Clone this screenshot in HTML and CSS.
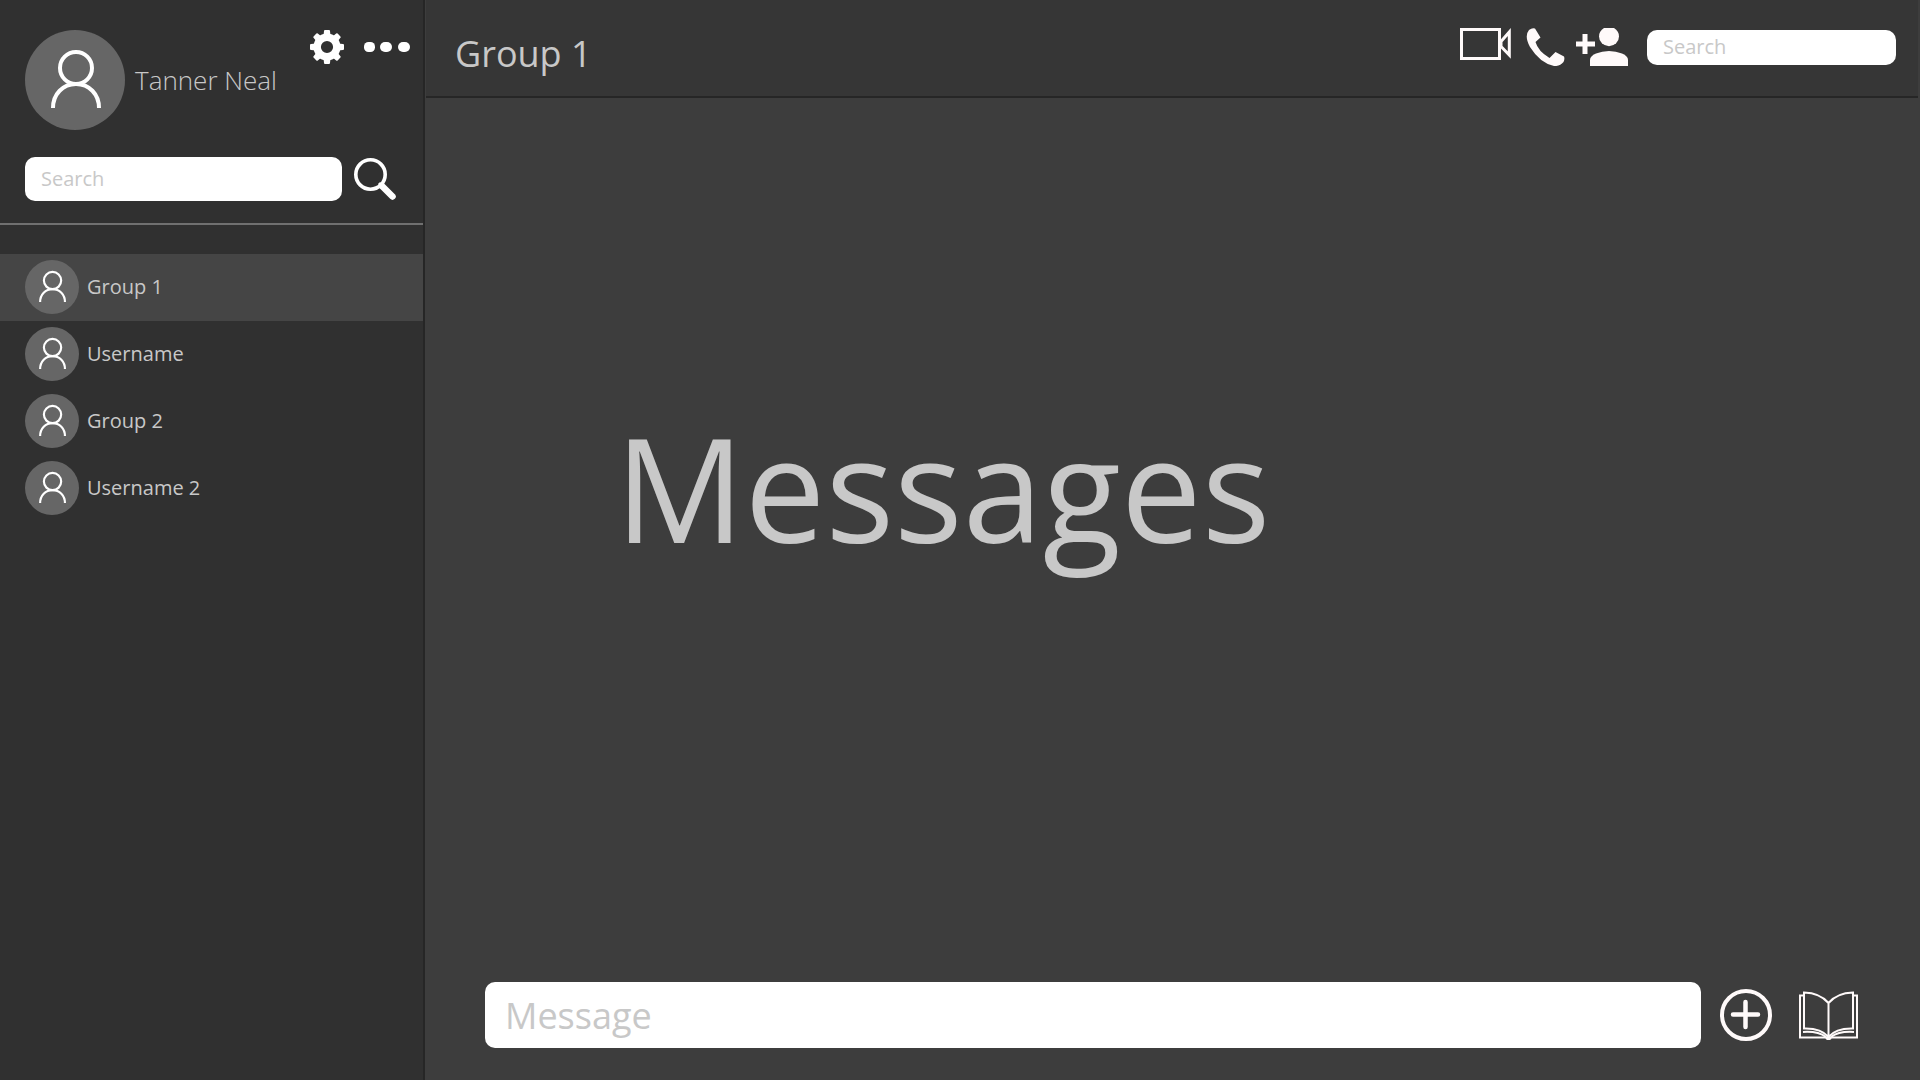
FILE: index.html
```html
<!DOCTYPE html>
<html lang="en">
<head>
<meta charset="utf-8">
<meta name="viewport" content="width=device-width, initial-scale=1">
<title>Group 1</title>
<link rel="stylesheet" href="styles.css">
</head>
<body>
<svg width="0" height="0" class="sprite" aria-hidden="true">
  <symbol id="person" viewBox="0 0 100 100">
    <circle cx="51" cy="38" r="16"/>
    <path d="M28 78C28 64 38 54 51 54S74 64 74 78"/>
  </symbol>
</svg>
<div class="app">
  <aside class="sidebar">
    <div class="profile">
      <span class="avatar avatar-large"><svg><use href="#person"/></svg></span>
      <span class="profile-name">Tanner Neal</span>
      <div class="profile-actions">
        <button class="icon-button" aria-label="Settings">
          <svg width="34" height="34" viewBox="0 0 34 34">
            <g fill="#fff">
              <path id="tooth" d="M13.500 6L14 1Q14 0 15 0H19Q20 0 20 1L20.500 6Z"/>
              <use href="#tooth" transform="rotate(45 17 17)"/>
              <use href="#tooth" transform="rotate(90 17 17)"/>
              <use href="#tooth" transform="rotate(135 17 17)"/>
              <use href="#tooth" transform="rotate(180 17 17)"/>
              <use href="#tooth" transform="rotate(225 17 17)"/>
              <use href="#tooth" transform="rotate(270 17 17)"/>
              <use href="#tooth" transform="rotate(315 17 17)"/>
            </g>
            <circle cx="17" cy="17" r="9.800" fill="none" stroke="#fff" stroke-width="7.400"/>
          </svg>
        </button>
        <button class="icon-button" aria-label="More">
          <svg width="46" height="10" viewBox="0 0 46 10" fill="#fff">
            <rect width="11" height="10" rx="4.500"/><rect x="16" width="12" height="10" rx="5"/><rect x="34" width="12" height="10" rx="5"/>
          </svg>
        </button>
      </div>
    </div>
    <form class="search-row">
      <input class="field sidebar-search" type="search" placeholder="Search" aria-label="Search conversations">
      <button class="icon-button" type="button" aria-label="Search">
        <svg width="42" height="42" viewBox="0 0 42 42" fill="none" stroke="#fff">
          <circle cx="16.500" cy="16.500" r="14.700" stroke-width="3.600"/>
          <path d="M28 28L38.500 38.500" stroke-width="6.500" stroke-linecap="round"/>
          <path d="M25 25L30 30" stroke-width="3"/>
        </svg>
      </button>
    </form>
    <nav class="conversations">
      <a class="conversation selected" href="#"><span class="avatar"><svg><use href="#person"/></svg></span>Group 1</a>
      <a class="conversation" href="#"><span class="avatar"><svg><use href="#person"/></svg></span>Username</a>
      <a class="conversation" href="#"><span class="avatar"><svg><use href="#person"/></svg></span>Group 2</a>
      <a class="conversation" href="#"><span class="avatar"><svg><use href="#person"/></svg></span>Username 2</a>
    </nav>
  </aside>
  <main class="chat">
    <header class="chat-header">
      <h1 class="chat-title">Group 1</h1>
      <div class="chat-tools">
        <button class="icon-button" aria-label="Video call">
          <svg width="51" height="38" viewBox="0 0 51 38" fill="none" stroke="#fffafa" stroke-width="3">
            <path d="M1.500 1.500H39.500V30.500H1.500Z"/>
            <path d="M41 13.500L49.300 4V27L41 18.500Z" stroke-width="3"/>
          </svg>
        </button>
        <button class="icon-button phone" aria-label="Call">
          <svg width="39" height="38" viewBox="0 0 39 38" fill="#fffafa">
            <path d="M3 2Q6-.5 9 .5L14.500 9.500L9.500 14Q12 23 23.500 30L29.500 24L38 28.500Q39 31 37.500 34Q34 38.500 28 38Q14 35 4 19Q-2 8 3 2Z"/>
          </svg>
        </button>
        <button class="icon-button" aria-label="Add person">
          <svg width="52" height="38" viewBox="0 0 52 38" fill="#fffafa">
            <path d="M6.500 6H11.500V13.500H19V18.500H11.500V26H6.500V18.500H0V13.500H6.500Z"/>
            <path d="M28 0H38Q43 3 43 8.500A10 9.700 0 0 1 23 8.500Q23 3 28 0Z"/>
            <path d="M14 38V32Q14 28 20 25.500Q26 23 33 23T46 25.500Q52 28 52 32V38Z"/>
          </svg>
        </button>
        <input class="field chat-search" type="search" placeholder="Search" aria-label="Search messages">
      </div>
    </header>
    <section class="messages"><h2 class="messages-title">Messages</h2></section>
    <form class="composer">
      <input class="field composer-input" type="text" placeholder="Message" aria-label="Message">
      <button class="icon-button" type="button" aria-label="Add attachment">
        <svg width="52" height="52" viewBox="0 0 52 52" fill="none" stroke="#fffafa">
          <circle cx="26" cy="26" r="24" stroke-width="4"/>
          <path d="M13 25.500H38M25.500 13V38" stroke-width="4.500" stroke-linecap="round"/>
        </svg>
      </button>
      <button class="icon-button book" type="button" aria-label="Library">
        <svg width="59" height="50" viewBox="0 0 59 50" fill="none" stroke="#fffafa" stroke-width="2">
          <path d="M29.500 12Q21 2 5 1.500V37.500Q22 37 29.500 46Q37 37 54 37.500V1.500Q38 2 29.500 12V46"/>
          <path d="M5 4.500H1V46.500H27M54 4.500H58V46.500H32"/>
          <path d="M4 41Q19 40 27 46M55 41Q40 40 32 46"/>
          <ellipse cx="29.500" cy="47" rx="3" ry="2" fill="#fffafa" stroke="none"/>
        </svg>
      </button>
    </form>
  </main>
</div>
</body>
</html>
```

FILE: styles.css
```css
* { box-sizing: border-box; }

body {
  margin: 0;
  background: #3d3d3d;
  color: #c8c8c8;
  font-family: "Open Sans", "Noto Sans", sans-serif;
}

.sprite { position: absolute; }

.app {
  display: flex;
  min-height: 100vh;
}

.sidebar {
  flex: 0 0 425px;
  background: #303030;
  border-right: 2px solid #262626;
}

.profile {
  display: flex;
  align-items: center;
  gap: 10px;
  padding: 30px 13px 27px 25px;
}

.profile-name {
  flex: 1;
  font-size: 26px;
  font-weight: 300;
  white-space: nowrap;
}

.profile-actions {
  display: flex;
  align-items: center;
  align-self: flex-start;
  gap: 20px;
}

.avatar {
  display: flex;
  flex: none;
  width: 54px;
  height: 54px;
  border-radius: 50%;
  background: #666;
}

.avatar svg {
  width: 100%;
  height: 100%;
  fill: none;
  stroke: #fff;
  stroke-width: 4;
}

.avatar-large {
  width: 100px;
  height: 100px;
}

.icon-button {
  display: flex;
  flex: none;
  padding: 0;
  border: 0;
  background: none;
  cursor: pointer;
}

.field {
  min-width: 0;
  border: 0;
  border-radius: 10px;
  background: #fff;
  color: #3d3d3d;
  font-family: inherit;
  font-size: 20px;
  padding: 0 16px 2px;
  appearance: none;
  outline: 0;
}

.field::placeholder {
  color: #c8c8c8;
  opacity: 1;
}

.search-row {
  display: flex;
  align-items: center;
  gap: 12px;
  padding: 0 27px 22px 25px;
  border-bottom: 2px solid #707070;
}

.sidebar-search {
  flex: 1;
  height: 44px;
}

.conversations { padding-top: 29px; }

.conversation {
  display: flex;
  align-items: center;
  gap: 8px;
  height: 67px;
  padding: 0 25px 2px;
  color: inherit;
  font-size: 20px;
  text-decoration: none;
}

.selected { background: #454545; }

.chat {
  display: flex;
  flex: 1;
  flex-direction: column;
  min-width: 0;
}

.chat-header {
  display: flex;
  align-items: center;
  justify-content: space-between;
  height: 98px;
  margin: 0 2px 0 1px;
  padding: 0 22px 0 29px;
  background: #363636;
  border-bottom: 2px solid #262626;
}

.chat-title {
  margin: 0;
  padding-top: 10px;
  font-size: 36px;
  font-weight: 400;
}

.chat-tools {
  display: flex;
  align-items: center;
  gap: 11px;
  padding-bottom: 2px;
}

.phone { margin-left: 4px; }

.chat-search {
  width: 249px;
  height: 35px;
  margin-left: 8px;
}

.messages {
  flex: 1;
  padding: 292px 40px 40px 190px;
}

.messages-title {
  margin: 0;
  font-size: 144px;
  font-weight: 400;
  line-height: 194px;
}

.composer {
  display: flex;
  align-items: center;
  padding: 0 62px 32px 60px;
}

.composer-input {
  flex: 1;
  height: 66px;
  margin-right: 19px;
  padding: 0 20px;
  font-size: 36px;
}

.book {
  margin-left: 27px;
  padding-top: 2px;
}
```
